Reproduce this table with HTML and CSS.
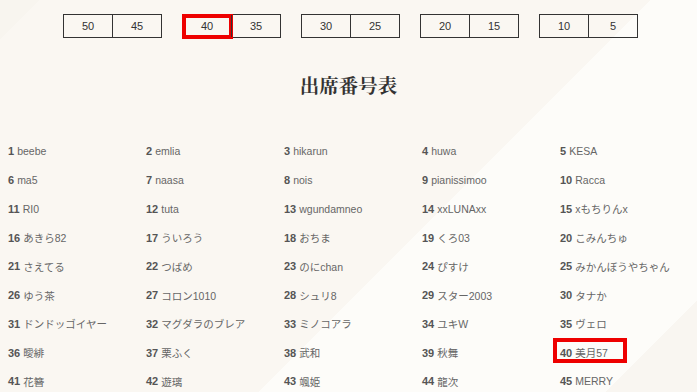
FILE: index.html
```html
<!DOCTYPE html>
<html lang="ja">
<head>
<meta charset="utf-8">
<title>出席番号表</title>
<link rel="stylesheet" href="styles.css">
</head>
<body>
<div class="page">
  <nav class="pager">
    <div class="group"><span class="cell">50</span><span class="cell">45</span></div>
    <div class="group"><span class="cell current">40</span><span class="cell">35</span></div>
    <div class="group"><span class="cell">30</span><span class="cell">25</span></div>
    <div class="group"><span class="cell">20</span><span class="cell">15</span></div>
    <div class="group"><span class="cell">10</span><span class="cell">5</span></div>
  </nav>
  <h1 class="title">出席番号表</h1>
  <ul class="roster">
    <li class="item"><b class="no">1</b> beebe</li>
    <li class="item"><b class="no">2</b> emlia</li>
    <li class="item"><b class="no">3</b> hikarun</li>
    <li class="item"><b class="no">4</b> huwa</li>
    <li class="item"><b class="no">5</b> KESA</li>
    <li class="item"><b class="no">6</b> ma5</li>
    <li class="item"><b class="no">7</b> naasa</li>
    <li class="item"><b class="no">8</b> nois</li>
    <li class="item"><b class="no">9</b> pianissimoo</li>
    <li class="item"><b class="no">10</b> Racca</li>
    <li class="item"><b class="no">11</b> RI0</li>
    <li class="item"><b class="no">12</b> tuta</li>
    <li class="item"><b class="no">13</b> wgundamneo</li>
    <li class="item"><b class="no">14</b> xxLUNAxx</li>
    <li class="item"><b class="no">15</b> xもちりんx</li>
    <li class="item"><b class="no">16</b> あきら82</li>
    <li class="item"><b class="no">17</b> ういろう</li>
    <li class="item"><b class="no">18</b> おちま</li>
    <li class="item"><b class="no">19</b> くろ03</li>
    <li class="item"><b class="no">20</b> こみんちゅ</li>
    <li class="item"><b class="no">21</b> さえてる</li>
    <li class="item"><b class="no">22</b> つばめ</li>
    <li class="item"><b class="no">23</b> のにchan</li>
    <li class="item"><b class="no">24</b> ぴすけ</li>
    <li class="item"><b class="no">25</b> みかんぼうやちゃん</li>
    <li class="item"><b class="no">26</b> ゆう茶</li>
    <li class="item"><b class="no">27</b> コロン1010</li>
    <li class="item"><b class="no">28</b> シュリ8</li>
    <li class="item"><b class="no">29</b> スター2003</li>
    <li class="item"><b class="no">30</b> タナか</li>
    <li class="item"><b class="no">31</b> ドンドッゴイヤー</li>
    <li class="item"><b class="no">32</b> マグダラのブレア</li>
    <li class="item"><b class="no">33</b> ミノコアラ</li>
    <li class="item"><b class="no">34</b> ユキW</li>
    <li class="item"><b class="no">35</b> ヴェロ</li>
    <li class="item"><b class="no">36</b> 曖緋</li>
    <li class="item"><b class="no">37</b> 栗ふく</li>
    <li class="item"><b class="no">38</b> 武和</li>
    <li class="item"><b class="no">39</b> 秋舞</li>
    <li class="item current"><b class="no">40</b> 美月57</li>
    <li class="item"><b class="no">41</b> 花簪</li>
    <li class="item"><b class="no">42</b> 遊璃</li>
    <li class="item"><b class="no">43</b> 颯姫</li>
    <li class="item"><b class="no">44</b> 龍次</li>
    <li class="item"><b class="no">45</b> MERRY</li>
  </ul>
</div>
</body>
</html>
```

FILE: styles.css
```css
html, body {
  margin: 0;
  padding: 0;
  height: 100%;
  overflow: hidden;
}

body {
  font-family: "Liberation Sans", "Noto Sans CJK JP", sans-serif;
  color: #333;
  background-color: #f8f5ef;
  background-image: linear-gradient(135deg,
    #f8f5ef 0px, #f8f5ef 28px,
    #faf7f2 28px, #faf7f2 460px,
    #fdfcf9 460px, #fdfcf9 705px,
    #f9f6f1 705px, #f9f6f1 100%);
}

.page {
  padding: 14px 0 0 8px;
}

.pager {
  display: flex;
  gap: 20px;
  margin-left: 55px;
}

.group {
  display: flex;
  border: 1px solid #333;
}

.cell {
  position: relative;
  width: 48px;
  height: 22px;
  display: flex;
  align-items: center;
  justify-content: center;
  font-size: 11px;
  color: #333;
}

.cell + .cell {
  border-left: 1px solid #333;
}

.cell.current::after {
  content: "";
  position: absolute;
  top: -1px;
  left: -1px;
  width: 51px;
  height: 25px;
  border: 4px solid #ee0000;
  box-sizing: border-box;
}

.title {
  margin: 33px 0 0 -8px;
  text-align: center;
  font-family: "Noto Serif CJK JP", "Noto Sans CJK JP", serif;
  font-weight: 700;
  font-size: 19.5px;
  line-height: 28px;
  color: #333;
}

.roster {
  list-style: none;
  margin: 38px 0 0;
  padding: 0;
  display: grid;
  grid-template-columns: repeat(5, 138px);
  grid-auto-rows: 28.75px;
}

.item {
  position: relative;
  display: flex;
  align-items: center;
  gap: 3px;
  font-size: 10.5px;
  color: #666;
  white-space: nowrap;
}

.no {
  font-size: 11px;
  font-weight: 700;
  color: #555;
}

.item.current::after {
  content: "";
  position: absolute;
  top: 0;
  left: -7px;
  width: 74px;
  height: 25px;
  border: 4px solid #ee0000;
  box-sizing: border-box;
}
```
